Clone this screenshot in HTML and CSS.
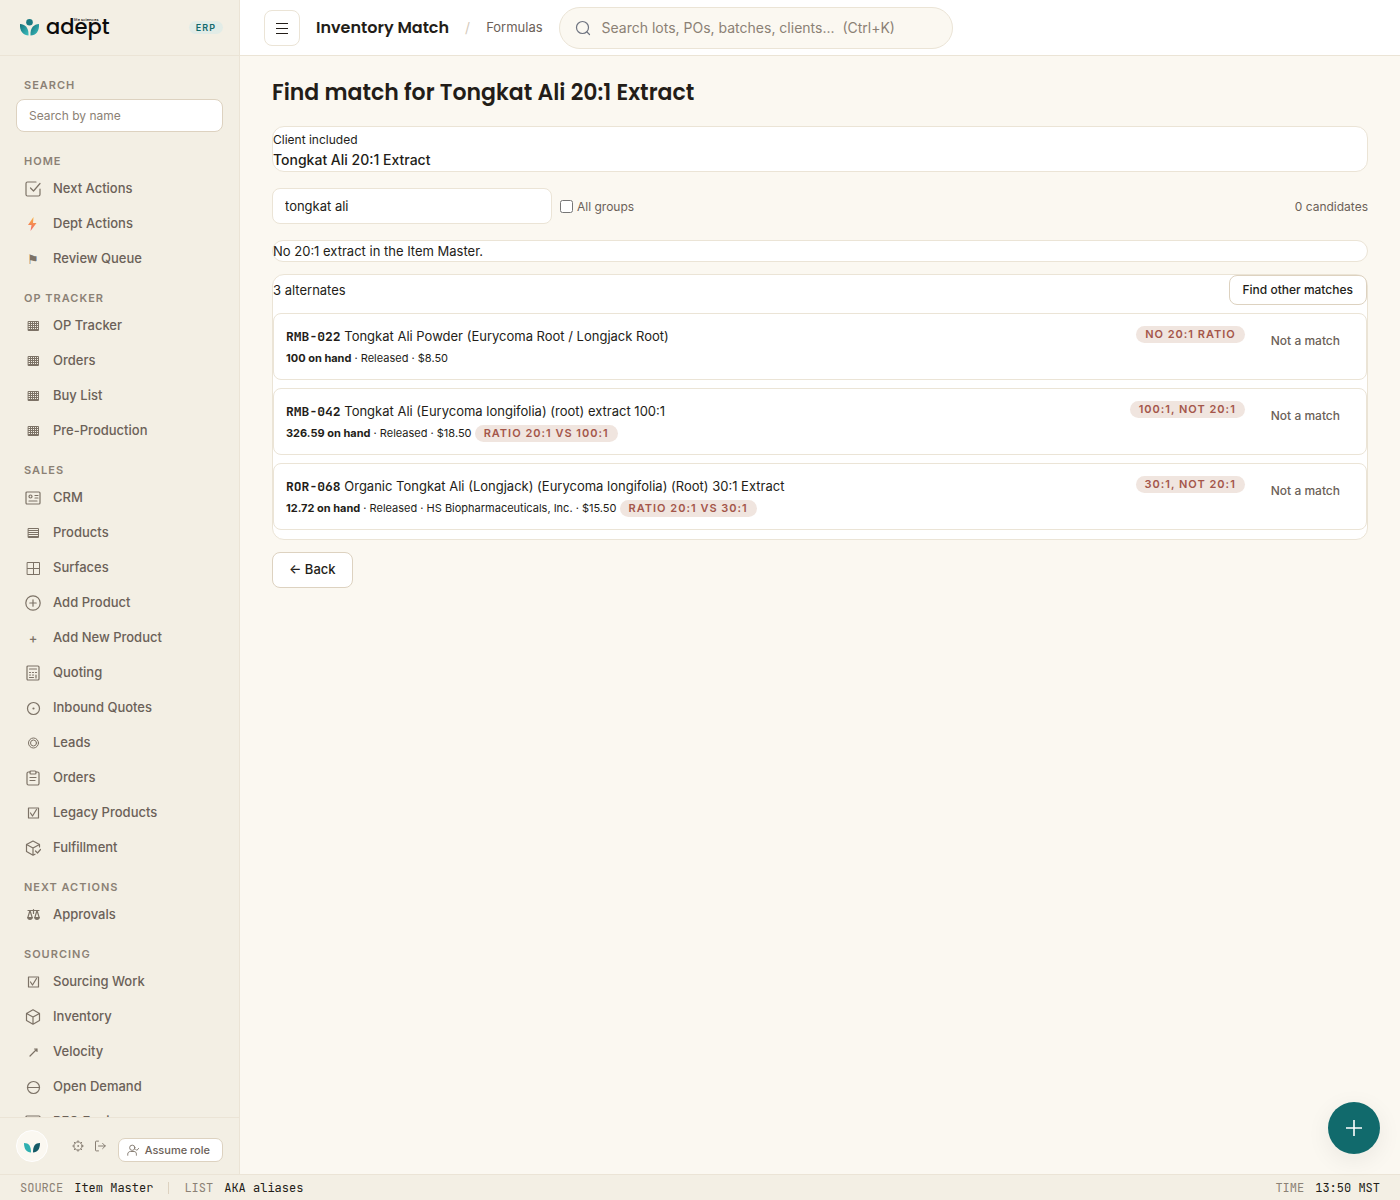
FILE: index.html
```html
<!DOCTYPE html>
<html lang="en">

<head>
    <meta charset="UTF-8">
    <meta name="viewport" content="width=device-width, initial-scale=1.0">
    <title>Inventory Match</title>
    <link rel="stylesheet" href="styles.css">
</head>

<body>
    <!-- icons that are used more than once -->
    <svg class="defs" width="0" height="0">
        <defs>
            <linearGradient id="bolt" x1="0" y1="0" x2="0" y2="1">
                <stop offset="0" stop-color="#f8b13c" />
                <stop offset="1" stop-color="#f0646c" />
            </linearGradient>
        </defs>
        <symbol id="grid" viewBox="0 0 16 16">
            <path d="M3.500 3.500h10v9h-10zM3.500 5.500h10M3.500 7.500h10M3.500 9.500h10M3.500 11.500h10M5.500 3.500v9M7.500 3.500v9M9.500 3.500v9M11.500 3.500v9" />
        </symbol>
        <symbol id="tick" viewBox="0 0 16 16">
            <path d="M3.500 3h10v10h-10zM5.500 8l2 3 4-6.500" />
        </symbol>
    </svg>

    <div class="app">
        <aside class="sidebar">
            <div class="brand">
                <svg width="20" height="18" viewBox="0 0 20 18">
                    <defs>
                        <linearGradient id="leaf" x1="0" y1="0" x2="1" y2="1">
                            <stop offset="0" stop-color="#14717a" />
                            <stop offset="1" stop-color="#3cc0c0" />
                        </linearGradient>
                    </defs>
                    <circle cx="9.500" cy="3.300" r="3.300" fill="#197a82" />
                    <path d="M0 5c5 .3 9 3.500 8.500 11.500C3 16.500-.5 12 0 5z" fill="url(#leaf)" />
                    <path d="M19 5c-5 .3-9 3.500-8.500 11.500C16 16.500 19.500 12 19 5z" fill="url(#leaf)" />
                </svg>
                <span class="brand-name">adept<small>life sciences</small></span>
                <span class="brand-tag">ERP</span>
            </div>

            <nav class="nav">
                <label class="nav-label" for="nav-search">Search</label>
                <input class="nav-search" id="nav-search" type="text" placeholder="Search by name">

                <h2 class="nav-label">Home</h2>
                <a class="nav-item" href="#"><svg class="icon" viewBox="0 0 16 16"><path d="M15 8v5.500a1.500 1.500 0 0 1-1.500 1.500h-11A1.500 1.500 0 0 1 1 13.500v-11A1.500 1.500 0 0 1 2.500 1H11M5.500 7l3 3L15 2.500" /></svg>Next Actions</a>
                <a class="nav-item" href="#"><svg class="icon bolt" viewBox="0 0 16 16"><path d="M8.500 1L3 9h3.500l-1 6L11.500 7H8z" /></svg>Dept Actions</a>
                <a class="nav-item" href="#"><span class="glyph">⚑</span>Review Queue</a>

                <h2 class="nav-label">OP Tracker</h2>
                <a class="nav-item" href="#"><svg class="icon thin"><use href="#grid" /></svg>OP Tracker</a>
                <a class="nav-item" href="#"><svg class="icon thin"><use href="#grid" /></svg>Orders</a>
                <a class="nav-item" href="#"><svg class="icon thin"><use href="#grid" /></svg>Buy List</a>
                <a class="nav-item" href="#"><svg class="icon thin"><use href="#grid" /></svg>Pre-Production</a>

                <h2 class="nav-label">Sales</h2>
                <a class="nav-item" href="#"><svg class="icon" viewBox="0 0 16 16"><rect x="1" y="2" width="14" height="12" rx="1" /><circle cx="5.500" cy="6.500" r="1.500" /><path d="M10 5.500h3M10 8h3M4 11h8" /></svg>CRM</a>
                <a class="nav-item" href="#"><svg class="icon thin" viewBox="0 0 16 16"><path d="M3.500 3.500h10v9h-10zM3.500 5.500h10M3.500 7.500h10M3.500 9.500h10M3.500 11.500h10" /></svg>Products</a>
                <a class="nav-item" href="#"><svg class="icon thin" viewBox="0 0 16 16"><path d="M2.500 2.500h12v12h-12zM8.500 2.500v12M2.500 8.500h12" /></svg>Surfaces</a>
                <a class="nav-item" href="#"><svg class="icon" viewBox="0 0 16 16"><circle cx="8" cy="8" r="7.200" /><path d="M8 4.800v6.400M4.800 8h6.400" /></svg>Add Product</a>
                <a class="nav-item" href="#"><span class="glyph">+</span>Add New Product</a>
                <a class="nav-item" href="#"><svg class="icon" viewBox="0 0 16 16"><rect x="2" y="1" width="12" height="14" rx="1" /><path d="M4.500 4h7M4.500 7.500h1M7.500 7.500h1M10.500 7.500h1M4.500 10h1M7.500 10h1M4.500 12.500h4M11 10v3" /></svg>Quoting</a>
                <a class="nav-item" href="#"><svg class="icon" viewBox="0 0 16 16"><circle cx="8.500" cy="8.500" r="6" /><circle cx="8.500" cy="8.500" r=".5" /></svg>Inbound Quotes</a>
                <a class="nav-item" href="#"><svg class="icon thin" viewBox="0 0 16 16"><circle cx="8.500" cy="8" r="5" /><circle cx="8.500" cy="8" r="3" /></svg>Leads</a>
                <a class="nav-item" href="#"><svg class="icon" viewBox="0 0 16 16"><path d="M5 2H3.500A1.500 1.500 0 0 0 2 3.500v10A1.500 1.500 0 0 0 3.500 15h9a1.500 1.500 0 0 0 1.500-1.500v-10A1.500 1.500 0 0 0 12.500 2H11M5 7.500h6M5 10.500h5" /><rect x="5" y="1" width="6" height="3" rx="1" /></svg>Orders</a>
                <a class="nav-item" href="#"><svg class="icon"><use href="#tick" /></svg>Legacy Products</a>
                <a class="nav-item" href="#"><svg class="icon" viewBox="0 0 16 16"><path d="M14.500 7V4.500L8 1 1.500 4.500v7L8 15.200l2-1M1.500 4.500L8 8l6.500-3.500M8 8v7M10.500 11l2 2L15.500 9.500" /></svg>Fulfillment</a>

                <h2 class="nav-label">Next Actions</h2>
                <a class="nav-item" href="#"><svg class="icon scales" viewBox="0 0 16 16"><path d="M3 3.500h11M8.500 2.500v4M5 3.500L3 10M5 3.500L7 10M12 3.500L10 10M12 3.500L14 10" /><path class="pan" d="M2 10h6c0 4-6 4-6 0zM9 10h6c0 4-6 4-6 0z" /></svg>Approvals</a>

                <h2 class="nav-label">Sourcing</h2>
                <a class="nav-item" href="#"><svg class="icon"><use href="#tick" /></svg>Sourcing Work</a>
                <a class="nav-item" href="#"><svg class="icon" viewBox="0 0 16 16"><path d="M8 .8l6.500 3.700v7L8 15.200l-6.500-3.700v-7zM1.500 4.500L8 8l6.500-3.500M8 8v7.200" /></svg>Inventory</a>
                <a class="nav-item" href="#"><svg class="icon" viewBox="0 0 16 16"><path d="M5 12l7-7M9.500 5H12v2.500" /></svg>Velocity</a>
                <a class="nav-item" href="#"><svg class="icon" viewBox="0 0 16 16"><circle cx="8.500" cy="8.500" r="6" /><path d="M2.500 8.500h12" /></svg>Open Demand</a>
                <a class="nav-item" href="#"><svg class="icon" viewBox="0 0 16 16"><rect x="1" y="2" width="14" height="12" rx="1" /></svg>RFQ Engine</a>
            </nav>

            <div class="user-bar">
                <span class="avatar">
                    <svg width="16" height="10" viewBox="0 0 16 10">
                        <path d="M0 0c5 0 7 3 7 9.500C2.500 9.500 0 6 0 0z" fill="#2fb0b0" />
                        <path d="M16 0c-5 0-7 3-7 9.500C13.500 9.500 16 6 16 0z" fill="#145a66" />
                    </svg>
                </span>
                <button class="icon-btn" type="button" aria-label="Settings">
                    <svg class="icon" viewBox="0 0 16 16"><circle cx="8" cy="8" r="5.500" /><circle cx="8" cy="8" r=".5" /><path d="M8 1v1.500M8 13.500V15M1 8h1.500M13.500 8H15M3 3l1 1M12 12l1 1M13 3l-1 1M4 12l-1 1" /></svg>
                </button>
                <button class="icon-btn" type="button" aria-label="Sign out">
                    <svg class="icon" viewBox="0 0 16 16"><path d="M6 1.500H3A1 1 0 0 0 2 2.500v11a1 1 0 0 0 1 1h3M6 8h9M11.500 4.500L15 8l-3.500 3.500" /></svg>
                </button>
                <button class="role-btn" type="button">
                    <svg class="icon" viewBox="0 0 16 16"><circle cx="7" cy="5" r="3.500" /><path d="M1 15v-1.500C1 11.500 2.500 10 4.500 10h5c2 0 3 1.500 3 3.500V15M11.500 7l1.500 1.500L16 5.500" /></svg>
                    Assume role
                </button>
            </div>
        </aside>

        <div class="content">
            <header class="topbar">
                <button class="menu-btn" type="button" aria-label="Toggle menu">
                    <svg width="12" height="12" viewBox="0 0 12 12"><path d="M0 1.500h12M0 6.500h12M0 11.500h12" /></svg>
                </button>
                <span class="topbar-title">Inventory Match</span>
                <span class="slash">/</span>
                <a class="crumb" href="#">Formulas</a>
                <div class="global-search">
                    <svg width="16" height="16" viewBox="0 0 16 16"><circle cx="7.500" cy="7.500" r="6" /><path d="M12 12l2.500 2.500" /></svg>
                    <input type="text" aria-label="Search everything" placeholder="Search lots, POs, batches, clients...&nbsp; (Ctrl+K)">
                </div>
            </header>

            <main class="page">
                <h1>Find match for Tongkat Ali 20:1 Extract</h1>

                <section class="card target">
                    <p class="target-note">Client included</p>
                    <p class="target-name">Tongkat Ali 20:1 Extract</p>
                </section>

                <div class="filters">
                    <input class="filter-input" type="text" aria-label="Search items" value="tongkat ali">
                    <label class="check"><input type="checkbox">All groups</label>
                    <span class="count">0 candidates</span>
                </div>

                <p class="card notice">No 20:1 extract in the Item Master.</p>

                <section class="card alternates">
                    <div class="alternates-head">
                        <span>3 alternates</span>
                        <button class="btn btn-small" type="button">Find other matches</button>
                    </div>

                    <article class="row">
                        <div class="row-info">
                            <p class="row-title"><code>RMB-022</code> Tongkat Ali Powder (Eurycoma Root / Longjack Root)</p>
                            <p class="row-meta"><b>100 on hand</b> · Released · $8.50</p>
                        </div>
                        <span class="badge">No 20:1 ratio</span>
                        <button class="btn btn-small btn-ghost" type="button">Not a match</button>
                    </article>

                    <article class="row">
                        <div class="row-info">
                            <p class="row-title"><code>RMB-042</code> Tongkat Ali (Eurycoma longifolia) (root) extract 100:1</p>
                            <p class="row-meta"><b>326.59 on hand</b> · Released · $18.50 <span class="badge">Ratio 20:1 vs 100:1</span></p>
                        </div>
                        <span class="badge">100:1, not 20:1</span>
                        <button class="btn btn-small btn-ghost" type="button">Not a match</button>
                    </article>

                    <article class="row">
                        <div class="row-info">
                            <p class="row-title"><code>ROR-068</code> Organic Tongkat Ali (Longjack) (Eurycoma longifolia) (Root) 30:1 Extract</p>
                            <p class="row-meta"><b>12.72 on hand</b> · Released · HS Biopharmaceuticals, Inc. · $15.50 <span class="badge">Ratio 20:1 vs 30:1</span></p>
                        </div>
                        <span class="badge">30:1, not 20:1</span>
                        <button class="btn btn-small btn-ghost" type="button">Not a match</button>
                    </article>
                </section>

                <button class="btn" type="button">← Back</button>
            </main>
        </div>
    </div>

    <footer class="statusbar">
        <span>SOURCE</span><b>Item Master</b>
        <i class="divider"></i>
        <span>LIST</span><b>AKA aliases</b>
        <span class="time">TIME</span><b>13:50 MST</b>
    </footer>

    <button class="fab" type="button" aria-label="Add">
        <svg width="16" height="16" viewBox="0 0 16 16"><path d="M8 0v16M0 8h16" /></svg>
    </button>
</body>

</html>
```
FILE: styles.css
```css
:root {
    --bg: #fbf8f1;
    --side: #f3efe4;
    --line: #ebe4d6;
    --line-strong: #ddd2c0;
    --text: #231d18;
    --muted: #6b6158;
    --faint: #8b8175;
    --teal: #116a6c;
    --mono: "JetBrains Mono", "Liberation Mono", monospace;
    --display: Poppins, Inter, sans-serif;
}

* {
    box-sizing: border-box;
}

body,
h1,
h2,
p {
    margin: 0;
}

body {
    display: flex;
    flex-direction: column;
    height: 100vh;
    background: var(--bg);
    color: var(--text);
    font-family: Inter, sans-serif;
    font-size: 13px;
}

button,
input {
    font-family: inherit;
}

a {
    text-decoration: none;
}

svg {
    flex: none;
    fill: none;
    stroke-linecap: round;
    stroke-linejoin: round;
}

.defs {
    position: absolute;
}

.app {
    display: flex;
    flex: 1;
    min-height: 0;
}

/* sidebar */
.sidebar {
    display: flex;
    flex-direction: column;
    flex: none;
    width: 240px;
    background: var(--side);
    border-right: 1px solid var(--line);
}

.brand {
    display: flex;
    align-items: center;
    flex: none;
    height: 56px;
    padding: 0 16px 0 20px;
    border-bottom: 1px solid var(--line);
}

.brand-name {
    position: relative;
    margin-left: 6px;
    padding-bottom: 2px;
    color: #0b0b0b;
    font-family: var(--display);
    font-size: 21px;
    font-weight: 500;
    line-height: 22px;
}

.brand-name small {
    position: absolute;
    top: 2px;
    left: 28px;
    font-size: 4px;
    line-height: 4px;
    white-space: nowrap;
}

.brand-tag {
    margin-left: auto;
    padding: 0 7px;
    border-radius: 7px;
    background: #e2ece7;
    color: var(--teal);
    font-size: 9px;
    font-weight: 600;
    letter-spacing: 1px;
    line-height: 13px;
}

.nav {
    flex: 1;
    overflow: hidden;
    padding: 21px 16px 0;
}

.nav-label {
    display: block;
    margin: 15px 0 1px;
    padding-left: 8px;
    color: var(--faint);
    font-size: 11px;
    font-weight: 600;
    letter-spacing: 1px;
    line-height: 16px;
    text-transform: uppercase;
}

.nav-label:first-child {
    margin: 0 0 6px;
}

.nav-search {
    display: block;
    width: 100%;
    height: 33px;
    margin-bottom: 21px;
    padding: 0 12px;
    border: 1px solid var(--line-strong);
    border-radius: 8px;
    background: #fff;
    font-size: 12px;
}

.nav-search::placeholder,
.global-search input::placeholder {
    color: var(--faint);
    opacity: 1;
}

.nav-item {
    display: flex;
    align-items: center;
    gap: 12px;
    height: 35px;
    padding-left: 9px;
    color: var(--muted);
    font-size: 13px;
    font-weight: 500;
}

.icon {
    width: 16px;
    height: 16px;
    stroke: #7c7266;
    stroke-width: 1.2;
}

.nav-item .icon,
.glyph {
    margin-top: 2px;
}

.thin {
    stroke-width: 1;
}

.bolt {
    fill: url(#bolt);
    stroke: none;
}

.scales .pan {
    fill: #7c7266;
    stroke: none;
}

.glyph {
    flex: none;
    width: 16px;
    color: #7c7266;
    font-size: 13px;
    line-height: 16px;
    text-align: center;
}

.user-bar {
    display: flex;
    align-items: center;
    flex: none;
    height: 57px;
    padding: 0 16px;
    border-top: 1px solid var(--line);
}

.avatar {
    display: flex;
    align-items: center;
    justify-content: center;
    width: 32px;
    height: 32px;
    margin-right: auto;
    padding-top: 4px;
    border: 1px solid #fff;
    border-radius: 50%;
    background: var(--bg);
}

.icon-btn {
    display: flex;
    margin-right: 10px;
    padding: 0;
    border: 0;
    background: none;
}

.icon-btn .icon,
.role-btn .icon {
    width: 12px;
    height: 12px;
}

.role-btn {
    display: flex;
    align-items: center;
    gap: 6px;
    height: 24px;
    margin: 8px 0 0 2px;
    padding: 0 12px 0 8px;
    border: 1px solid var(--line-strong);
    border-radius: 7px;
    background: #fff;
    color: var(--muted);
    font-size: 11px;
    font-weight: 500;
}

/* top bar */
.content {
    display: flex;
    flex-direction: column;
    flex: 1;
    min-width: 0;
}

.topbar {
    display: flex;
    align-items: center;
    gap: 16px;
    flex: none;
    height: 56px;
    padding: 0 24px;
    background: #fff;
    border-bottom: 1px solid var(--line);
}

.menu-btn {
    display: flex;
    align-items: center;
    justify-content: center;
    width: 36px;
    height: 36px;
    border: 1px solid var(--line);
    border-radius: 8px;
    background: #fff;
    stroke: var(--text);
}

.topbar-title {
    font-family: var(--display);
    font-size: 16px;
    font-weight: 600;
}

.slash {
    color: #d5cabb;
    font-size: 14px;
}

.crumb {
    padding-bottom: 1px;
    color: var(--muted);
    font-size: 13px;
}

.global-search {
    display: flex;
    align-items: center;
    gap: 11px;
    width: 394px;
    height: 42px;
    padding: 0 15px;
    border: 1px solid var(--line);
    border-radius: 21px;
    background: var(--bg);
    stroke: #6f7480;
    stroke-width: 1.2;
}

.global-search input {
    flex: 1;
    min-width: 0;
    padding: 0;
    border: 0;
    background: none;
    font-size: 14px;
}

/* page */
.page {
    flex: 1;
    overflow: auto;
    padding: 21px 32px;
}

h1 {
    margin-bottom: 17px;
    font-family: var(--display);
    font-size: 22px;
    font-weight: 600;
    line-height: 32px;
}

.card {
    border: 1px solid var(--line);
    border-radius: 12px;
    background: #fff;
}

.target {
    padding-top: 4px;
}

.target-note {
    font-size: 12px;
    line-height: 18px;
}

.target-name {
    font-size: 14px;
    font-weight: 500;
    line-height: 22px;
}

.filters {
    display: flex;
    align-items: center;
    gap: 8px;
    margin: 16px 0;
    color: var(--muted);
    font-size: 12px;
}

.filter-input {
    width: 280px;
    height: 36px;
    padding: 0 12px;
    border: 1px solid var(--line);
    border-radius: 8px;
    background: #fff;
    color: var(--text);
    font-size: 13px;
}

.check {
    display: flex;
    align-items: center;
    gap: 4px;
}

.check input {
    width: 13px;
    height: 13px;
    margin: 0;
}

.count {
    margin-left: auto;
}

.notice {
    margin-bottom: 12px;
    line-height: 20px;
}

.alternates {
    margin-bottom: 12px;
    padding-bottom: 1px;
}

.alternates-head {
    display: flex;
    align-items: center;
    justify-content: space-between;
    margin-bottom: 8px;
}

.btn {
    height: 36px;
    padding: 0 16px 2px;
    border: 1px solid var(--line-strong);
    border-radius: 8px;
    background: #fff;
    color: var(--text);
    font-size: 13px;
    font-weight: 500;
}

.btn-small {
    height: 30px;
    padding: 0 13px 2px;
    font-size: 12px;
}

.btn-ghost {
    border-color: transparent;
    background: none;
    color: var(--muted);
}

.row {
    display: flex;
    align-items: flex-start;
    gap: 12px;
    margin-bottom: 8px;
    padding: 12px 12px 10px;
    border: 1px solid var(--line);
    border-radius: 8px;
}

.row-info {
    flex: 1;
}

.row-title {
    line-height: 21px;
}

.row-title code {
    font-family: var(--mono);
    font-size: 13px;
    font-weight: 600;
}

.row-meta {
    font-size: 11px;
    line-height: 22px;
}

.badge {
    display: inline-block;
    padding: 0 9px;
    border-radius: 9px;
    background: #f0e5df;
    color: #a4564a;
    font-size: 11px;
    font-weight: 600;
    letter-spacing: 1px;
    line-height: 17px;
    text-transform: uppercase;
}

/* status bar */
.statusbar {
    display: flex;
    align-items: center;
    gap: 11px;
    flex: none;
    height: 26px;
    padding: 0 20px;
    border-top: 1px solid var(--line);
    background: var(--side);
    color: var(--faint);
    font-family: var(--mono);
    font-size: 12px;
}

.statusbar b {
    color: var(--text);
    font-weight: 400;
}

.divider {
    width: 1px;
    height: 12px;
    margin: 0 4px;
    background: var(--line-strong);
}

.time {
    margin-left: auto;
}

.fab {
    position: fixed;
    right: 20px;
    bottom: 46px;
    display: flex;
    align-items: center;
    justify-content: center;
    width: 52px;
    height: 52px;
    border: 0;
    border-radius: 50%;
    background: var(--teal);
    box-shadow: 0 6px 24px rgba(35, 29, 24, .07);
    stroke: #fff;
    stroke-width: 1.6;
}
```
